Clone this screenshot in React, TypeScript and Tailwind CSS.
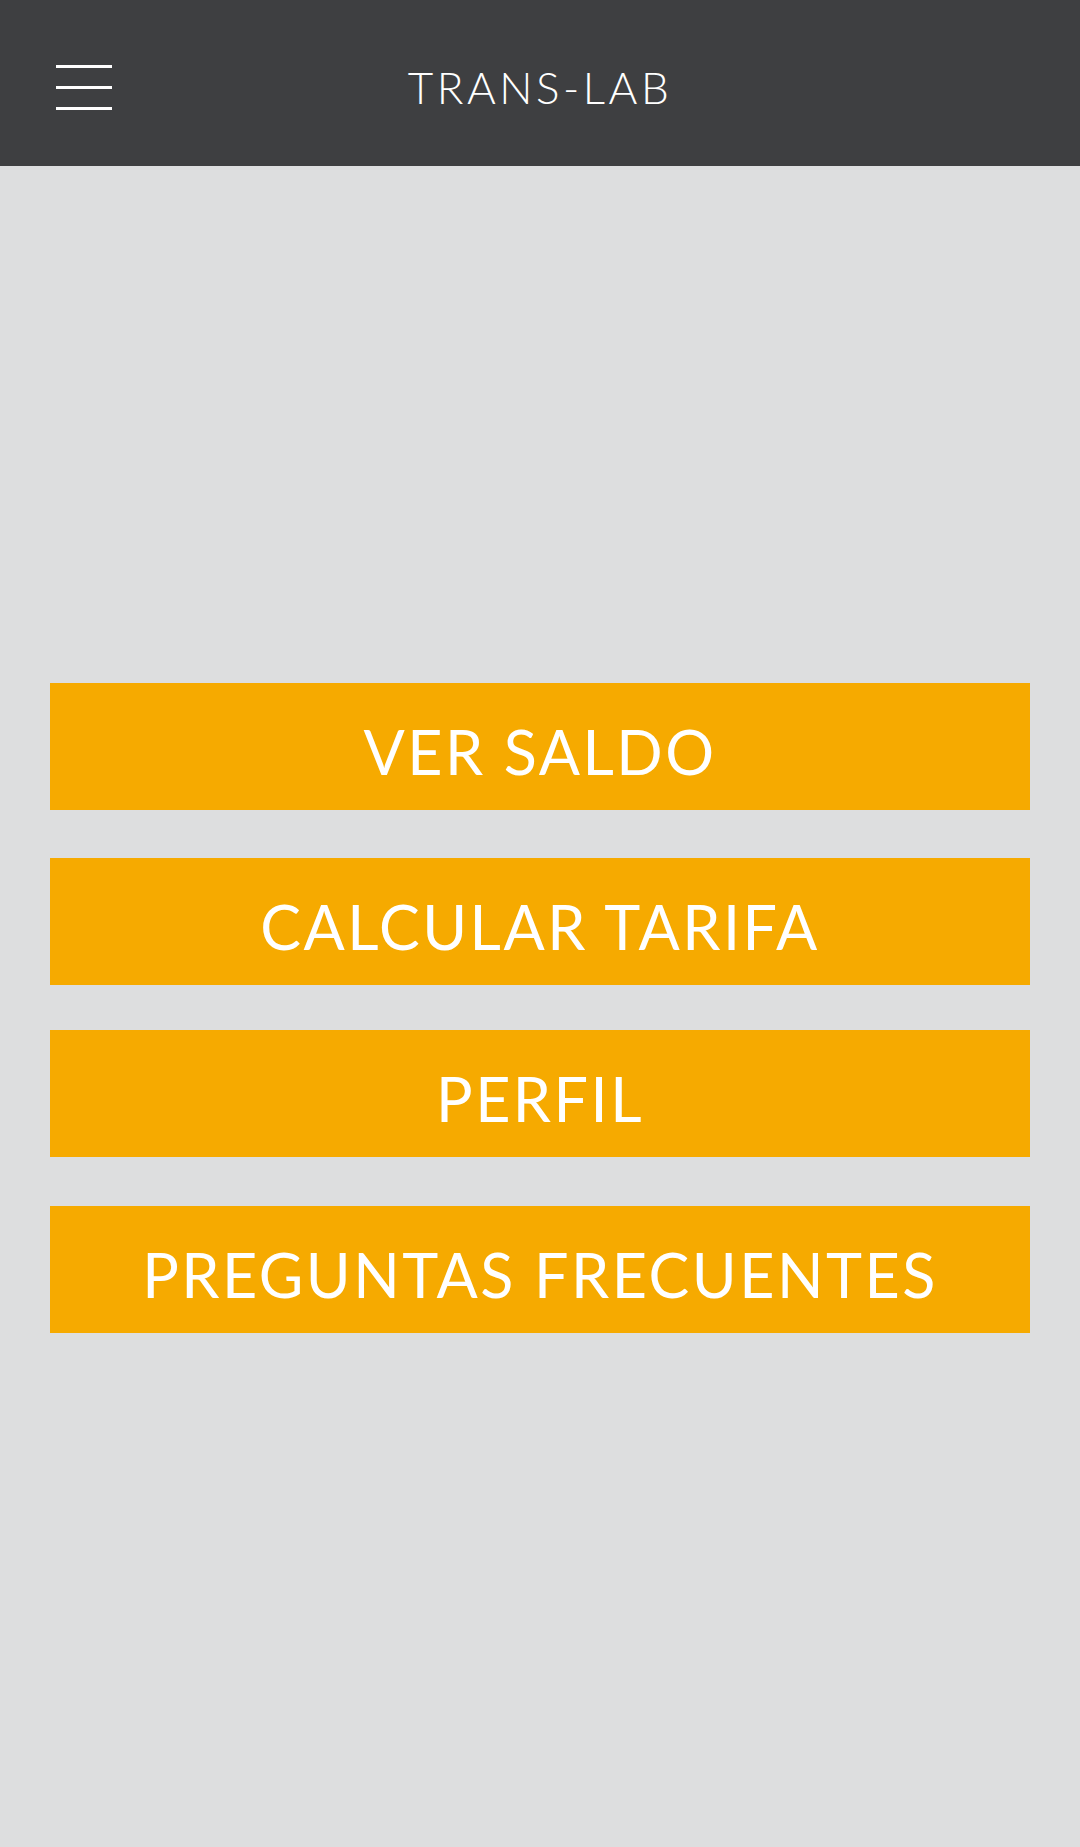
const items = [
  { label: "VER SALDO", mt: "mt-[517px]" },
  { label: "CALCULAR TARIFA", mt: "mt-[48px]" },
  { label: "PERFIL", mt: "mt-[45px]" },
  { label: "PREGUNTAS FRECUENTES", mt: "mt-[49px]" },
];

function MenuIcon() {
  return (
    <div className="flex flex-col gap-[18px] w-[56px]">
      <span className="block h-[3px] bg-white" />
      <span className="block h-[3px] bg-white" />
      <span className="block h-[3px] bg-white" />
    </div>
  );
}

export default function App() {
  return (
    <div
      className="min-h-[1847px] bg-[#dddedf] flex flex-col"
      style={{ fontFamily: "Lato, 'Open Sans', sans-serif" }}
    >
      <header className="relative h-[166px] bg-[#3e3f41] flex items-center justify-center pt-[8px]">
        <button className="absolute left-[56px] top-[65px]">
          <MenuIcon />
        </button>
        <h1 className="text-white text-[44px] font-light tracking-[3.5px] leading-none">
          TRANS-LAB
        </h1>
      </header>
      <main className="flex flex-col px-[50px]">
        {items.map((item) => (
          <button
            key={item.label}
            className={`${item.mt} h-[127px] bg-[#f6aa00] text-white text-[61px] leading-none tracking-[2.5px] flex items-center justify-center pt-[10px]`}
          >
            {item.label}
          </button>
        ))}
      </main>
    </div>
  );
}
